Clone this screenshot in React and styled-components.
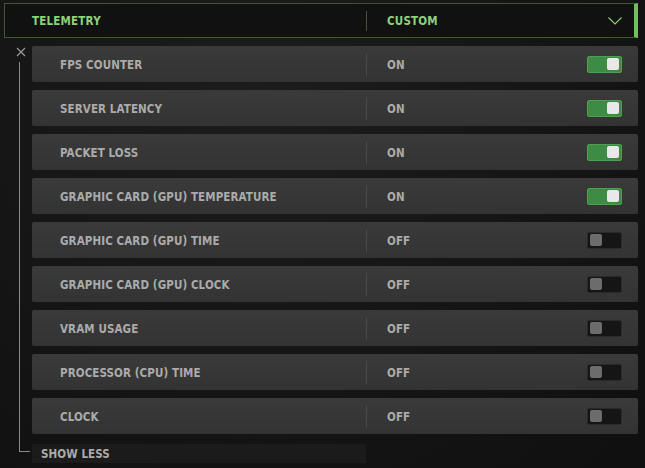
import React, { useState } from "react";
import styled, { createGlobalStyle } from "styled-components";

const GlobalStyle = createGlobalStyle`
    html, body {
        margin: 0;
        padding: 0;
        background: #121212;
    }
    body {
        font-family: "DejaVu Sans Condensed", "DejaVu Sans", sans-serif;
    }
`;

const Page = styled.div`
    width: 645px;
    height: 468px;
    overflow: hidden;
    box-sizing: border-box;
    padding: 3px 7px 0 4px;
    background: radial-gradient(ellipse at 40% 20%, #1c1c1c 0%, #151515 55%, #0f0f0f 100%);
`;

const Header = styled.div`
    display: flex;
    align-items: center;
    height: 35px;
    box-sizing: border-box;
    border: 1px solid #3b5a34;
    border-right: 4px solid #6fbf5a;
    background: #111111;
    color: #8fd17a;
    font-size: 11.5px;
    font-weight: bold;
    letter-spacing: 0.2px;
`;

const HeaderLabel = styled.div`
    width: 361px;
    padding-left: 27px;
    padding-top: 1px;
    box-sizing: border-box;
`;

const Divider = styled.div`
    width: 1px;
    height: ${p => p.$h || 23}px;
    background: ${p => p.$color || "#4a4a4a"};
`;

const HeaderValue = styled.div`
    flex: 1;
    display: flex;
    align-items: center;
    justify-content: space-between;
    padding: 1px 12px 0 20px;
`;

const Body = styled.div`
    display: flex;
    margin-top: 8px;
`;

const Tree = styled.div`
    width: 28px;
    display: flex;
    flex-direction: column;
    align-items: flex-start;
`;

const Close = styled.div`
    margin-left: 12px;
    width: 10px;
    height: 10px;
    margin-top: 1px;
    display: flex;
`;

const TreeLine = styled.div`
    margin-left: 15px;
    margin-top: 5px;
    width: 10px;
    height: 389px;
    border-left: 1px solid #8a8a8a;
    border-bottom: 1px solid #8a8a8a;
`;

const List = styled.div`
    flex: 1;
    display: flex;
    flex-direction: column;
    gap: 8px;
`;

const Row = styled.div`
    display: flex;
    align-items: center;
    height: 36px;
    border-radius: 2px;
    background: linear-gradient(180deg, #3a3a3a 0%, #333333 100%);
    color: #ababab;
    font-size: 11.5px;
    font-weight: bold;
    letter-spacing: 0.1px;
`;

const RowLabel = styled.div`
    width: 334px;
    padding-left: 28px;
    padding-top: 2px;
    box-sizing: border-box;
`;

const RowValue = styled.div`
    flex: 1;
    display: flex;
    align-items: center;
    justify-content: space-between;
    padding: 0 16px 0 20px;
`;

const ValueText = styled.span`
    padding-top: 2px;
`;

const Toggle = styled.div`
    width: 35px;
    height: 17px;
    box-sizing: border-box;
    border-radius: 2px;
    border: 1px solid ${p => (p.$on ? "#4f9f53" : "#2a2a2a")};
    background: ${p => (p.$on ? "#3d8b45" : "#151515")};
    display: flex;
    align-items: center;
    justify-content: ${p => (p.$on ? "flex-end" : "flex-start")};
    padding: 0 2px;
    cursor: pointer;
`;

const Knob = styled.div`
    width: 12px;
    height: 12px;
    border-radius: 2px;
    background: ${p => (p.$on ? "#e8e8e8" : "#6c6c6c")};
`;

const ShowLess = styled.div`
    margin-top: 2px;
    width: 334px;
    height: 19px;
    display: flex;
    align-items: center;
    padding: 1px 0 0 9px;
    box-sizing: border-box;
    background: #1b1b1b;
    color: #ababab;
    font-size: 11.5px;
    font-weight: bold;
    letter-spacing: 0.1px;
`;

const initialItems = [
    { label: "FPS COUNTER", on: true },
    { label: "SERVER LATENCY", on: true },
    { label: "PACKET LOSS", on: true },
    { label: "GRAPHIC CARD (GPU) TEMPERATURE", on: true },
    { label: "GRAPHIC CARD (GPU) TIME", on: false },
    { label: "GRAPHIC CARD (GPU) CLOCK", on: false },
    { label: "VRAM USAGE", on: false },
    { label: "PROCESSOR (CPU) TIME", on: false },
    { label: "CLOCK", on: false },
];

const App = () => {
    const [items, setItems] = useState(initialItems);

    const handleToggle = (index) => {
        setItems(items.map((item, i) => (i == index ? { ...item, on: !item.on } : item)));
    };

    return (
        <Page>
            <GlobalStyle />
            <Header>
                <HeaderLabel>TELEMETRY</HeaderLabel>
                <Divider $h={20} $color="#3b5a34" />
                <HeaderValue>
                    <span>CUSTOM</span>
                    <svg width="14" height="8" viewBox="0 0 14 8" fill="none">
                        <path d="M0.5 0.5 L7 7 L13.5 0.5" stroke="#8fd17a" strokeWidth="1.1" />
                    </svg>
                </HeaderValue>
            </Header>
            <Body>
                <Tree>
                    <Close>
                        <svg width="10" height="10" viewBox="0 0 10 10">
                            <path d="M1 1 L9 9 M9 1 L1 9" stroke="#9a9a9a" strokeWidth="1.2" />
                        </svg>
                    </Close>
                    <TreeLine />
                </Tree>
                <List>
                    {items.map((item, index) => (
                        <Row key={`telemetry-row-${index}`}>
                            <RowLabel>{item.label}</RowLabel>
                            <Divider />
                            <RowValue>
                                <ValueText>{item.on ? "ON" : "OFF"}</ValueText>
                                <Toggle $on={item.on} onClick={() => handleToggle(index)}>
                                    <Knob $on={item.on} />
                                </Toggle>
                            </RowValue>
                        </Row>
                    ))}
                    <ShowLess>SHOW LESS</ShowLess>
                </List>
            </Body>
        </Page>
    );
};

export default App;
